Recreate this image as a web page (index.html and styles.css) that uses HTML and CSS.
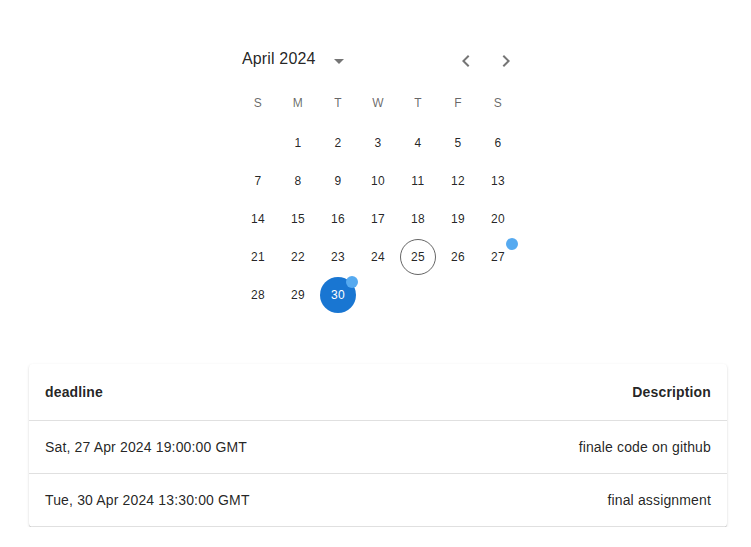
FILE: index.html
```html
<!DOCTYPE html>
<html>
<head>
<meta charset="utf-8">
<link rel="stylesheet" href="styles.css">
</head>
<body>
<div class="page">
  <div class="calendar">
    <div class="cal-header">
      <div class="label">April 2024</div>
      <button class="icon-btn view-btn" aria-label="switch view">
        <svg viewBox="0 0 24 24" width="24" height="24"><path d="M7 10l5 5 5-5z"/></svg>
      </button>
      <div class="arrows">
        <button class="icon-btn arrow" aria-label="previous month">
          <svg viewBox="0 0 24 24" width="24" height="24"><path d="M15.41 7.41 14 6l-6 6 6 6 1.41-1.41L10.83 12z"/></svg>
        </button>
        <button class="icon-btn arrow" aria-label="next month">
          <svg viewBox="0 0 24 24" width="24" height="24"><path d="M10 6 8.59 7.41 13.17 12l-4.58 4.59L10 18l6-6z"/></svg>
        </button>
      </div>
    </div>
    <div class="weekdays">
      <span>S</span><span>M</span><span>T</span><span>W</span><span>T</span><span>F</span><span>S</span>
    </div>
    <div class="weeks">
      <div class="week">
        <span class="day empty"></span><span class="day">1</span><span class="day">2</span><span class="day">3</span><span class="day">4</span><span class="day">5</span><span class="day">6</span>
      </div>
      <div class="week">
        <span class="day">7</span><span class="day">8</span><span class="day">9</span><span class="day">10</span><span class="day">11</span><span class="day">12</span><span class="day">13</span>
      </div>
      <div class="week">
        <span class="day">14</span><span class="day">15</span><span class="day">16</span><span class="day">17</span><span class="day">18</span><span class="day">19</span><span class="day">20</span>
      </div>
      <div class="week">
        <span class="day">21</span><span class="day">22</span><span class="day">23</span><span class="day">24</span><span class="day today">25</span><span class="day">26</span><span class="day">27<i class="badge"></i></span>
      </div>
      <div class="week">
        <span class="day">28</span><span class="day">29</span><span class="day selected">30<i class="badge"></i></span><span class="day empty"></span><span class="day empty"></span><span class="day empty"></span><span class="day empty"></span>
      </div>
    </div>
  </div>

  <div class="card">
    <table class="table">
      <thead>
        <tr><th class="left">deadline</th><th class="right">Description</th></tr>
      </thead>
      <tbody>
        <tr><td class="left">Sat, 27 Apr 2024 19:00:00 GMT</td><td class="right">finale code on github</td></tr>
        <tr><td class="left">Tue, 30 Apr 2024 13:30:00 GMT</td><td class="right">final assignment</td></tr>
      </tbody>
    </table>
  </div>
</div>
</body>
</html>
```

FILE: styles.css
```css
* { box-sizing: border-box; }

html, body {
  margin: 0;
  background: #fff;
  font-family: "Liberation Sans", Arial, sans-serif;
  color: rgba(0, 0, 0, 0.87);
}

.page {
  padding: 46px 24px 0 29px;
}

.calendar {
  width: 320px;
  height: 318px;
  margin: 0 auto;
}

.cal-header {
  display: flex;
  align-items: center;
  height: 30px;
  padding: 0 20px 0 24px;
}

.label {
  font-size: 16px;
  font-weight: 500;
  line-height: 24px;
  letter-spacing: 0.00938em;
  margin-right: 6px;
  padding-bottom: 5px;
}

.icon-btn {
  border: 0;
  background: none;
  padding: 0;
  display: flex;
  align-items: center;
  justify-content: center;
  cursor: pointer;
}

.icon-btn svg {
  fill: rgba(0, 0, 0, 0.54);
  display: block;
}

.view-btn {
  width: 34px;
  height: 34px;
  margin-right: auto;
}

.arrows {
  display: flex;
  gap: 16px;
}

.arrow {
  width: 24px;
  height: 24px;
}

.weekdays {
  display: flex;
  justify-content: center;
  margin-top: 7px;
}

.weekdays span {
  width: 36px;
  height: 40px;
  margin: 0 2px;
  display: flex;
  align-items: center;
  justify-content: center;
  font-size: 12px;
  letter-spacing: 0.03333em;
  color: rgba(0, 0, 0, 0.6);
}

.weeks {
  display: flex;
  flex-direction: column;
  gap: 2px;
  margin-top: 2px;
}

.week {
  display: flex;
  justify-content: center;
}

.day {
  position: relative;
  width: 36px;
  height: 36px;
  margin: 0 2px;
  border-radius: 50%;
  display: flex;
  align-items: center;
  justify-content: center;
  font-size: 12px;
  letter-spacing: 0.03333em;
  color: rgba(0, 0, 0, 0.87);
}

.day.today {
  border: 1px solid rgba(0, 0, 0, 0.6);
}

.day.selected {
  background: #1976d2;
  color: #fff;
  font-weight: 500;
}

.badge {
  position: absolute;
  top: -1px;
  left: 26px;
  width: 12px;
  height: 12px;
  border-radius: 50%;
  background: #56aaf0;
}

.card {
  background: #fff;
  border-radius: 4px;
  overflow: hidden;
  box-shadow: 0px 2px 1px -1px rgba(0, 0, 0, 0.2),
              0px 1px 1px 0px rgba(0, 0, 0, 0.14),
              0px 1px 3px 0px rgba(0, 0, 0, 0.12);
}

.table {
  width: 100%;
  border-collapse: collapse;
  font-size: 14px;
  letter-spacing: 0.01071em;
}

.table th,
.table td {
  padding: 16px;
  border-bottom: 1px solid rgb(224, 224, 224);
  color: rgba(0, 0, 0, 0.87);
}

.table th {
  font-weight: 700;
  line-height: 24px;
}

.table td {
  line-height: 20px;
}

.left { text-align: left; }
.right { text-align: right; }
```
